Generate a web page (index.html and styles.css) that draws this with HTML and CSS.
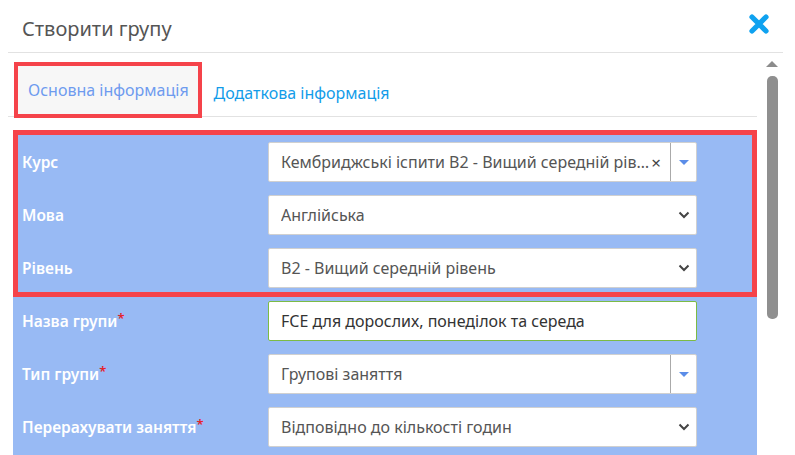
FILE: index.html
```html
<!DOCTYPE html>
<html lang="uk">
<head>
    <meta charset="UTF-8">
    <meta name="viewport" content="width=device-width, initial-scale=1.0">
    <title>Створити групу</title>
    <link rel="stylesheet" href="styles.css">
</head>
<body>
    <div class="modal">
        <div class="modal-header">
            <h3 class="modal-title">Створити групу</h3>
            <button class="close-btn" aria-label="Закрити">
                <svg width="22" height="22" viewBox="0 0 22 22"><path d="M4 4 L18 18 M18 4 L4 18" stroke="#0fa2f0" stroke-width="5.2" stroke-linecap="round"/></svg>
            </button>
        </div>
        <div class="modal-body">
            <div class="content">
                <div class="tabs">
                    <a class="tab active">Основна інформація</a>
                    <a class="tab">Додаткова інформація</a>
                </div>
                <div class="form">
                    <div class="group">
                        <div class="row">
                            <label>Курс</label>
                            <div class="field select2">
                                <span class="value">Кембриджські іспити B2 - Вищий середній рів…</span>
                                <span class="clear">×</span>
                                <span class="arrow"><i></i></span>
                            </div>
                        </div>
                        <div class="row">
                            <label>Мова</label>
                            <div class="field select">
                                <span class="value">Англійська</span>
                                <svg class="chev" width="12" height="8" viewBox="0 0 12 8"><path d="M1.5 1.5 L6 6 L10.5 1.5" fill="none" stroke="#444" stroke-width="2"/></svg>
                            </div>
                        </div>
                        <div class="row">
                            <label>Рівень</label>
                            <div class="field select">
                                <span class="value">B2 - Вищий середній рівень</span>
                                <svg class="chev" width="12" height="8" viewBox="0 0 12 8"><path d="M1.5 1.5 L6 6 L10.5 1.5" fill="none" stroke="#444" stroke-width="2"/></svg>
                            </div>
                        </div>
                    </div>
                    <div class="rows">
                        <div class="row">
                            <label>Назва групи<sup>*</sup></label>
                            <div class="field text valid">
                                <span class="value dark">FCE для дорослих, понеділок та середа</span>
                            </div>
                        </div>
                        <div class="row">
                            <label>Тип групи<sup>*</sup></label>
                            <div class="field select2">
                                <span class="value">Групові заняття</span>
                                <span class="arrow"><i></i></span>
                            </div>
                        </div>
                        <div class="row">
                            <label>Перерахувати заняття<sup>*</sup></label>
                            <div class="field select">
                                <span class="value">Відповідно до кількості годин</span>
                                <svg class="chev" width="12" height="8" viewBox="0 0 12 8"><path d="M1.5 1.5 L6 6 L10.5 1.5" fill="none" stroke="#444" stroke-width="2"/></svg>
                            </div>
                        </div>
                    </div>
                </div>
            </div>
            <div class="scrollbar">
                <div class="scroll-up"></div>
                <div class="thumb"></div>
            </div>
        </div>
    </div>
</body>
</html>
```

FILE: styles.css
```css
body { margin: 0; background: #fff; font-family: "Noto Sans", "Open Sans", sans-serif; color: #555; overflow: hidden; }
.modal { width: 795px; height: 455px; overflow: hidden; }
.modal-header { display: flex; align-items: center; justify-content: space-between; height: 52px; margin: 0 12px 0 8px; border-bottom: 1px solid #e2e2e2; }
.modal-title { margin: 5px 0 0 14px; font-size: 20px; font-weight: 400; color: #555; }
.close-btn { background: none; border: none; padding: 0; margin: 0 13px 4px 0; cursor: pointer; display: flex; }
.modal-body { display: flex; }
.content { width: 749px; margin-left: 8px; }
.tabs { display: flex; align-items: flex-end; height: 63px; border-bottom: 1px solid #e2e2e2; padding-left: 6px; }
.tab { display: flex; align-items: center; height: 47px; padding: 0 12px 0 12px; font-size: 16px; color: #129ce9; white-space: nowrap; }
.tab.active { border: 4px solid #f5434a; background: #f7f7f7; color: #6e9bef; padding: 0 9px 0 10px; height: 56px; margin-bottom: -2px; box-sizing: border-box; }
.form { background: #98baf4; margin: 13px 0 0 5px; padding-bottom: 20px; }
.group { outline: 5px solid #f5434a; outline-offset: -5px; padding: 12px 0 9px; display: flex; flex-direction: column; gap: 13px; }
.rows { padding-top: 4px; display: flex; flex-direction: column; gap: 13px; }
.row { display: flex; align-items: center; height: 40px; padding-left: 9px; }
.row label { width: 246px; color: #fff; font-size: 15.5px; font-weight: 600; }
.row label sup { color: #e5232b; font-size: 13px; vertical-align: 4px; line-height: 0; }
.field { display: flex; align-items: center; width: 429px; height: 40px; box-sizing: border-box; background: #fff; border: 1px solid #d0d0d0; border-radius: 2px; padding-left: 12px; font-size: 16px; }
.field .value { flex: 1; white-space: nowrap; overflow: hidden; color: #555; }
.field .value.dark { color: #333; }
.field.valid { border-color: #7cbb45; }
.select2 .clear { font-size: 17px; color: #444; margin-right: 9px; }
.select2 .arrow { display: flex; align-items: center; justify-content: center; width: 25px; height: 100%; border-left: 1px solid #aaa; }
.select2 .arrow i { border-left: 5px solid transparent; border-right: 5px solid transparent; border-top: 5px solid #5b8de8; }
.select .chev { margin-right: 6px; }
.scrollbar { width: 12px; margin-left: 9px; display: flex; flex-direction: column; align-items: center; }
.scroll-up { margin-top: 8px; border-left: 6px solid transparent; border-right: 6px solid transparent; border-bottom: 6px solid #8c8c8c; }
.thumb { width: 11px; height: 243px; margin-top: 9px; background: #8f8f8f; border-radius: 5px; }
```
